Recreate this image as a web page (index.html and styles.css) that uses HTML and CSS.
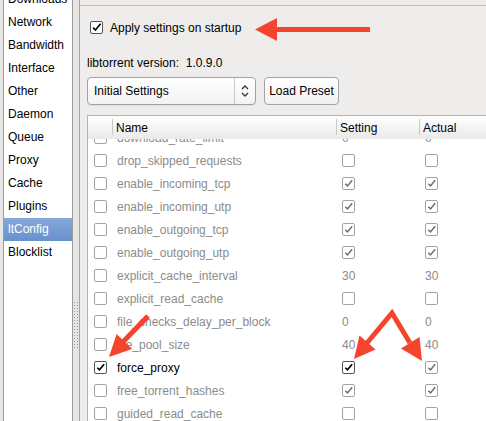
FILE: index.html
```html
<!DOCTYPE html>
<html>
<head>
<meta charset="utf-8">
<link rel="stylesheet" href="styles.css">
</head>
<body>
<div class="app">
  <div class="sidebar">
    <ul class="nav">
      <li>Downloads</li>
      <li>Network</li>
      <li>Bandwidth</li>
      <li>Interface</li>
      <li>Other</li>
      <li>Daemon</li>
      <li>Queue</li>
      <li>Proxy</li>
      <li>Cache</li>
      <li>Plugins</li>
      <li class="sel">ltConfig</li>
      <li>Blocklist</li>
    </ul>
  </div>
  <div class="splitter"><div class="grip"></div></div>
  <div class="content">
    <div class="panel">
      <label class="apply">
        <span class="cb dark"><svg viewBox="0 0 12 12"><path d="M2.3 6.2 L4.8 8.8 L10.5 1.8"/></svg></span>
        <span>Apply settings on startup</span>
      </label>
      <div class="version">libtorrent version:&nbsp; 1.0.9.0</div>
      <div class="controls">
        <div class="combo">
          <span class="combo-text">Initial Settings</span>
          <span class="combo-arrows">
            <svg viewBox="0 0 8 14" width="8" height="14"><path d="M1 5 L4 2 L7 5 M1 9 L4 12 L7 9"/></svg>
          </span>
        </div>
        <div class="button">Load Preset</div>
      </div>
      <div class="table">
        <div class="thead">
          <div class="th c1"></div>
          <div class="th c2">Name</div>
          <div class="th c3">Setting</div>
          <div class="th c4">Actual</div>
        </div>
        <div class="tbody">
          <div class="rows">
            <div class="row"><div class="c1"><span class="cb"></span></div><div class="c2">download_rate_limit</div><div class="c3">0</div><div class="c4">0</div></div>
            <div class="row"><div class="c1"><span class="cb"></span></div><div class="c2">drop_skipped_requests</div><div class="c3"><span class="cb"></span></div><div class="c4"><span class="cb"></span></div></div>
            <div class="row"><div class="c1"><span class="cb"></span></div><div class="c2">enable_incoming_tcp</div><div class="c3"><span class="cb"><svg viewBox="0 0 12 12"><path d="M2.5 6.3 L4.9 8.6 L10 2.4"/></svg></span></div><div class="c4"><span class="cb"><svg viewBox="0 0 12 12"><path d="M2.5 6.3 L4.9 8.6 L10 2.4"/></svg></span></div></div>
            <div class="row"><div class="c1"><span class="cb"></span></div><div class="c2">enable_incoming_utp</div><div class="c3"><span class="cb"><svg viewBox="0 0 12 12"><path d="M2.5 6.3 L4.9 8.6 L10 2.4"/></svg></span></div><div class="c4"><span class="cb"><svg viewBox="0 0 12 12"><path d="M2.5 6.3 L4.9 8.6 L10 2.4"/></svg></span></div></div>
            <div class="row"><div class="c1"><span class="cb"></span></div><div class="c2">enable_outgoing_tcp</div><div class="c3"><span class="cb"><svg viewBox="0 0 12 12"><path d="M2.5 6.3 L4.9 8.6 L10 2.4"/></svg></span></div><div class="c4"><span class="cb"><svg viewBox="0 0 12 12"><path d="M2.5 6.3 L4.9 8.6 L10 2.4"/></svg></span></div></div>
            <div class="row"><div class="c1"><span class="cb"></span></div><div class="c2">enable_outgoing_utp</div><div class="c3"><span class="cb"><svg viewBox="0 0 12 12"><path d="M2.5 6.3 L4.9 8.6 L10 2.4"/></svg></span></div><div class="c4"><span class="cb"><svg viewBox="0 0 12 12"><path d="M2.5 6.3 L4.9 8.6 L10 2.4"/></svg></span></div></div>
            <div class="row"><div class="c1"><span class="cb"></span></div><div class="c2">explicit_cache_interval</div><div class="c3">30</div><div class="c4">30</div></div>
            <div class="row"><div class="c1"><span class="cb"></span></div><div class="c2">explicit_read_cache</div><div class="c3"><span class="cb"></span></div><div class="c4"><span class="cb"></span></div></div>
            <div class="row"><div class="c1"><span class="cb"></span></div><div class="c2">file_checks_delay_per_block</div><div class="c3">0</div><div class="c4">0</div></div>
            <div class="row"><div class="c1"><span class="cb"></span></div><div class="c2">file_pool_size</div><div class="c3">40</div><div class="c4">40</div></div>
            <div class="row on"><div class="c1"><span class="cb dark"><svg viewBox="0 0 12 12"><path d="M2.5 6.3 L4.9 8.6 L10 2.4"/></svg></span></div><div class="c2">force_proxy</div><div class="c3"><span class="cb dark"><svg viewBox="0 0 12 12"><path d="M2.5 6.3 L4.9 8.6 L10 2.4"/></svg></span></div><div class="c4"><span class="cb"><svg viewBox="0 0 12 12"><path d="M2.5 6.3 L4.9 8.6 L10 2.4"/></svg></span></div></div>
            <div class="row"><div class="c1"><span class="cb"></span></div><div class="c2">free_torrent_hashes</div><div class="c3"><span class="cb"><svg viewBox="0 0 12 12"><path d="M2.5 6.3 L4.9 8.6 L10 2.4"/></svg></span></div><div class="c4"><span class="cb"><svg viewBox="0 0 12 12"><path d="M2.5 6.3 L4.9 8.6 L10 2.4"/></svg></span></div></div>
            <div class="row"><div class="c1"><span class="cb"></span></div><div class="c2">guided_read_cache</div><div class="c3"><span class="cb"></span></div><div class="c4"><span class="cb"></span></div></div>
          </div>
        </div>
      </div>
    </div>
  </div>
</div>
<svg class="arrows" viewBox="0 0 486 421" width="486" height="421">
  <g fill="#f4442d" stroke="#f4442d">
    <line x1="274" y1="29.5" x2="370" y2="29.5" stroke-width="5"/>
    <polygon points="255,29.5 277,18 277,41" stroke="none"/>
    <line x1="148" y1="316" x2="122" y2="343" stroke-width="5"/>
    <polygon points="109,357 116.6,334 132,349" stroke="none"/>
    <polyline points="367,343 392,313 410,343" fill="none" stroke-width="5" stroke-linejoin="miter"/>
    <polygon points="354,359 359.5,335.5 375.5,349.5" stroke="none"/>
    <polygon points="422,361 419.5,337 401,348.5" stroke="none"/>
  </g>
</svg>
</body>
</html>
```

FILE: styles.css
```css
* { box-sizing: border-box; }
html, body {
  margin: 0;
  padding: 0;
  width: 486px;
  height: 421px;
  overflow: hidden;
  background: #e8e7e5;
  font-family: "Liberation Sans", Arial, sans-serif;
  font-size: 12px;
  color: #000;
}
.app {
  display: flex;
  height: 421px;
  position: relative;
}
.sidebar {
  margin-left: 3px;
  width: 70px;
  border-left: 1px solid #9c9c9c;
  border-right: 1px solid #9c9c9c;
  background: #fff;
  overflow: hidden;
}
.nav {
  list-style: none;
  margin: -12px 0 0 0;
  padding: 0;
}
.nav li {
  height: 23px;
  line-height: 23px;
  padding-left: 4px;
  white-space: nowrap;
}
.nav li.sel {
  background: linear-gradient(#86a9dc, #6890cc);
  color: #fff;
}
.splitter {
  width: 6px;
  background: #e6e5e3;
}
.grip {
  margin: 302px 0 0 1px;
  width: 5px;
  height: 47px;
  background-image: radial-gradient(circle at 0.5px 0.5px, #9a9a9a 0.75px, transparent 0.9px);
  background-size: 3px 3px;
}
.content {
  flex: 1;
  border-left: 1px solid #a5a5a5;
  background: #eeedeb;
  padding-top: 5px;
  display: flex;
  flex-direction: column;
  min-width: 0;
}
.panel {
  flex: 1;
  border-top: 1px solid #c2c2c2;
  padding-left: 7px;
  display: flex;
  flex-direction: column;
  min-height: 0;
}
.apply {
  display: flex;
  align-items: center;
  gap: 7px;
  margin-top: 15px;
  margin-left: 3px;
  height: 13px;
  font-size: 12px;
}
.cb {
  display: inline-flex;
  width: 13px;
  height: 13px;
  border: 1px solid #a3a3a3;
  border-radius: 2px;
  background: #fff;
  flex: none;
}
.cb svg {
  width: 11px;
  height: 11px;
  fill: none;
  stroke: #6e6e6e;
  stroke-width: 1.6;
}
.cb.dark {
  border-color: #555;
}
.cb.dark svg {
  stroke: #000;
  stroke-width: 1.8;
}
.version {
  margin-top: 22px;
  height: 14px;
  line-height: 14px;
}
.controls {
  display: flex;
  gap: 8px;
  margin-top: 7px;
  height: 28px;
}
.combo {
  width: 169px;
  height: 28px;
  border: 1px solid #a3a3a3;
  border-radius: 4px;
  background: linear-gradient(#ffffff, #f3f3f3);
  display: flex;
  align-items: center;
  box-shadow: 0 1px 0 rgba(0,0,0,0.05);
}
.combo-text {
  flex: 1;
  padding-left: 6px;
}
.combo-arrows {
  width: 21px;
  height: 26px;
  border-left: 1px solid #c8c8c8;
  display: flex;
  align-items: center;
  justify-content: center;
}
.combo-arrows svg {
  fill: none;
  stroke: #333;
  stroke-width: 1.3;
}
.button {
  width: 75px;
  height: 28px;
  border: 1px solid #a3a3a3;
  border-radius: 4px;
  background: linear-gradient(#ffffff, #f1f1f1);
  display: flex;
  align-items: center;
  justify-content: center;
}
.table {
  margin-top: 10px;
  flex: 1;
  min-height: 0;
  border-top: 1px solid #b3b3b3;
  border-left: 1px solid #b3b3b3;
  background: #fff;
  display: flex;
  flex-direction: column;
  margin-right: -20px;
}
.thead {
  display: flex;
  height: 23px;
  background: linear-gradient(#ffffff, #e9e9e9);
  position: relative;
  z-index: 1;
  flex: none;
}
.th {
  display: flex;
  align-items: center;
  padding-left: 4px;
  position: relative;
}
.th + .th::before {
  content: "";
  position: absolute;
  left: 0;
  top: 3px;
  bottom: 4px;
  width: 1px;
  background: #c9c9c9;
}
.c1 { width: 24px; flex: none; }
.c2 { width: 224px; flex: none; }
.c3 { width: 83px; flex: none; }
.c4 { flex: 1; }
.tbody {
  flex: 1;
  overflow: hidden;
}
.rows {
  margin-top: -13px;
}
.row {
  display: flex;
  height: 23px;
  align-items: center;
  color: #8b8b8b;
}
.row.on .c2 { color: #000; }
.row .c1 { padding-left: 6px; display: flex; }
.row .c2 { padding-left: 5px; white-space: nowrap; }
.row .c3, .row .c4 { padding-left: 6px; display: flex; }
.arrows {
  position: absolute;
  left: 0;
  top: 0;
  pointer-events: none;
}
```
